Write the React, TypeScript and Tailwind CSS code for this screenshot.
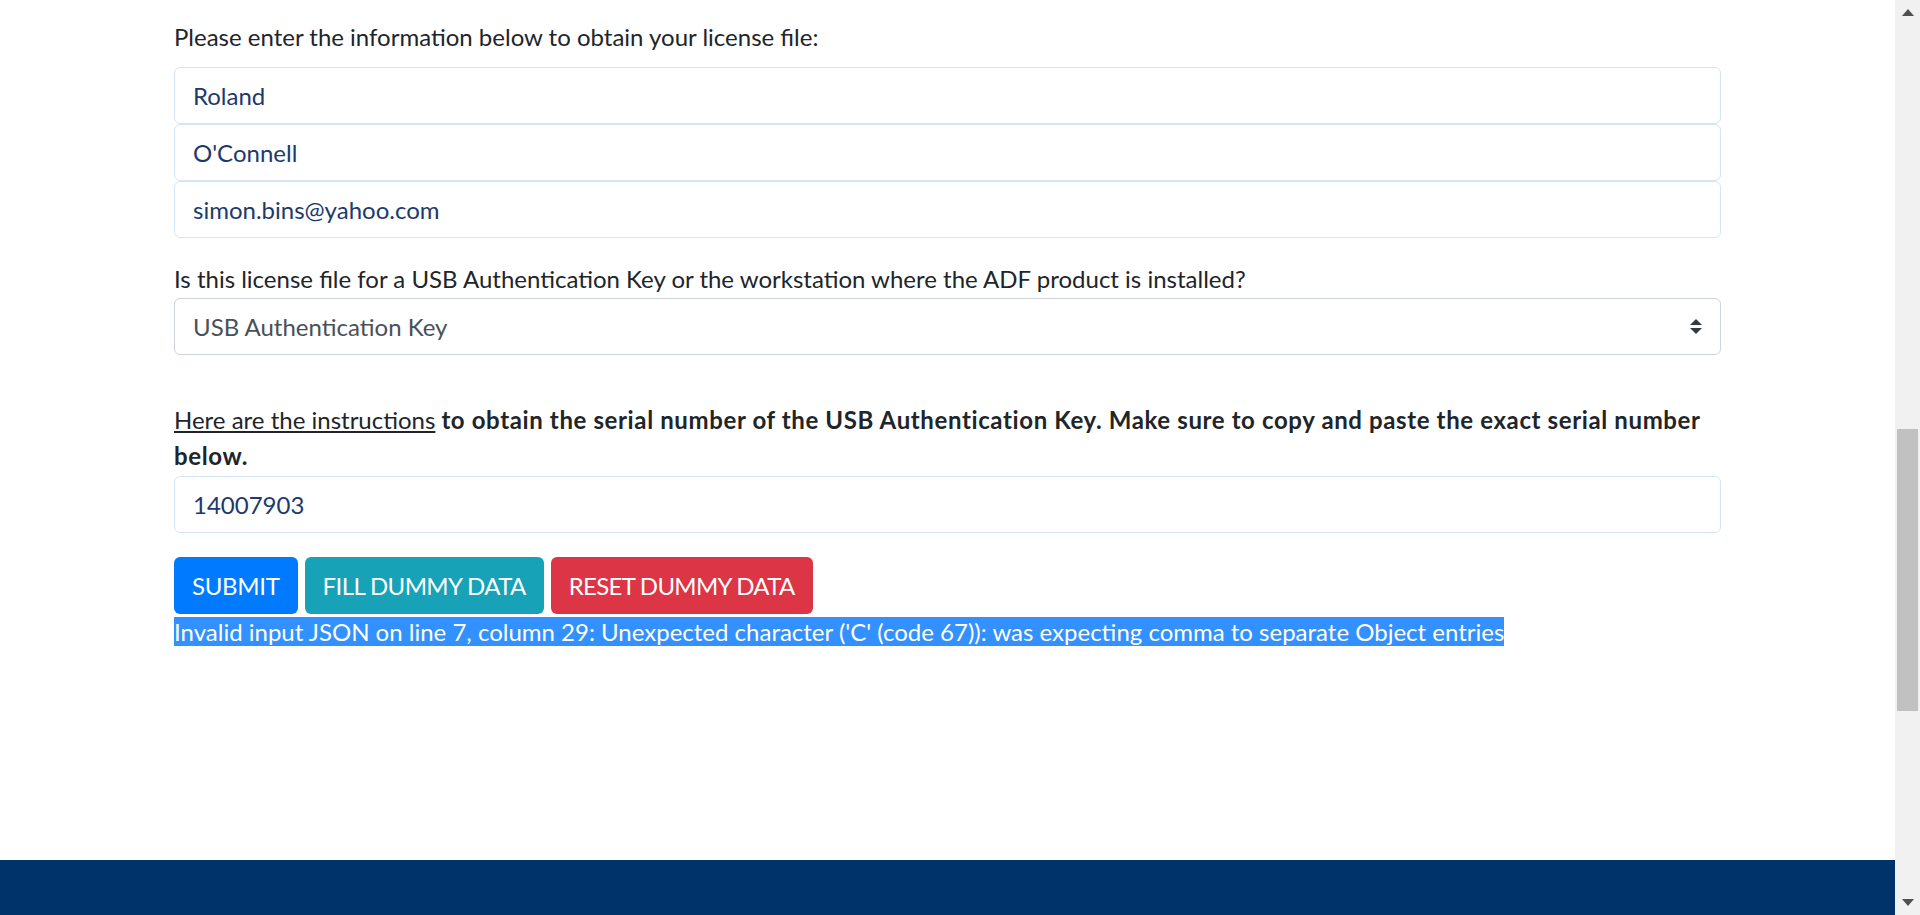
import React from "react";

const inputCls =
  "block w-full h-[57px] px-[18px] text-[24px] leading-[36px] text-[#1c3a6e] bg-white border border-[#d3e5f7] rounded-[6px] outline-none";

export default function App() {
  return (
    <div
      className="flex h-[915px] w-[1920px] overflow-hidden bg-white text-[#212529]"
      style={{ fontFamily: "Lato, 'Noto Sans', sans-serif" }}
    >
      {/* PAGE */}
      <div className="flex flex-1 flex-col">
        <div className="ml-[174px] w-[1547px] pt-[19px]">
          <p className="mb-[12px] text-[24px] leading-[36px]">
            Please enter the information below to obtain your license file:
          </p>

          <div className="flex flex-col">
            <input className={inputCls} defaultValue="Roland" readOnly />
            <input className={inputCls} defaultValue="O'Connell" readOnly />
            <input className={inputCls} defaultValue="simon.bins@yahoo.com" readOnly />
          </div>

          <p className="mt-[23px] mb-[1px] text-[24px] leading-[36px]">
            Is this license file for a USB Authentication Key or the workstation where the ADF product is installed?
          </p>

          {/* SELECT */}
          <div className="flex h-[57px] items-center justify-between rounded-[6px] border border-[#ced4da] bg-white pl-[18px] pr-[18px] text-[24px] text-[#495057]">
            <span>USB Authentication Key</span>
            <svg width="12" height="15" viewBox="0 0 12 15">
              <path d="M6 0 L12 6 L0 6 Z" fill="#343a40" />
              <path d="M0 9 L12 9 L6 15 Z" fill="#343a40" />
            </svg>
          </div>

          <p className="mt-[47px] text-[24px] font-bold leading-[36px] tracking-[0.62px]">
            <span className="mr-[6px] font-normal tracking-normal underline">Here are the instructions</span>
            to obtain the serial number of the USB Authentication Key. Make sure to copy and paste the exact serial number below.
          </p>

          <input className={`${inputCls} mt-[2px]`} defaultValue="14007903" readOnly />

          {/* BUTTONS */}
          <div className="mt-[24px] flex gap-[7px]">
            <button className="h-[57px] rounded-[6px] bg-[#007bff] px-[18px] text-[24px] tracking-[-0.3px] text-white">
              SUBMIT
            </button>
            <button className="h-[57px] rounded-[6px] bg-[#17a2b8] px-[18px] text-[24px] tracking-[-0.6px] text-white">
              FILL DUMMY DATA
            </button>
            <button className="h-[57px] rounded-[6px] bg-[#dc3545] px-[18px] text-[24px] tracking-[-0.7px] text-white">
              RESET DUMMY DATA
            </button>
          </div>

          <div className="text-[24px] leading-[36px]">
            <span className="bg-[#3390ff] text-white">
              Invalid input JSON on line 7, column 29: Unexpected character ('C' (code 67)): was expecting comma to separate Object entries
            </span>
          </div>
        </div>

        <div className="flex-1" />

        {/* FOOTER */}
        <div className="h-[55px] bg-[#01336b]" />
      </div>

      {/* SCROLLBAR */}
      <div className="flex w-[25px] flex-col bg-[#f1f1f1]">
        <div className="flex h-[25px] items-center justify-center">
          <svg width="12" height="7" viewBox="0 0 12 7">
            <path d="M6 0 L12 7 L0 7 Z" fill="#505050" />
          </svg>
        </div>
        <div className="h-[404px]" />
        <div className="mx-[2px] h-[282px] bg-[#c1c1c1]" />
        <div className="flex-1" />
        <div className="flex h-[25px] items-center justify-center">
          <svg width="12" height="7" viewBox="0 0 12 7">
            <path d="M0 0 L12 0 L6 7 Z" fill="#505050" />
          </svg>
        </div>
      </div>
    </div>
  );
}
